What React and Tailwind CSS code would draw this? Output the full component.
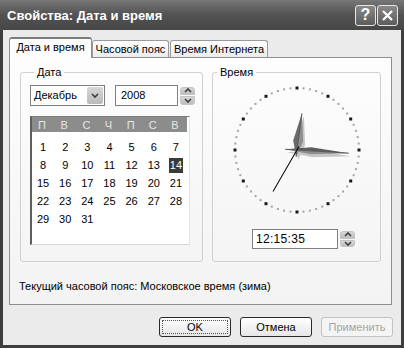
import React from "react";

const FONT = { fontFamily: '"Liberation Sans", Arial, sans-serif' };

function Chevron({ dir = "down", className = "" }) {
  const d = dir === "down" ? "M1 1 L4 4 L7 1" : "M1 4 L4 1 L7 4";
  return (
    <svg width="8" height="5" viewBox="0 0 8 5" className={className}>
      <path d={d} fill="none" stroke="#3c3c3c" strokeWidth="1.6" />
    </svg>
  );
}

function Spin({ h }) {
  return (
    <div className={`flex flex-col w-[15px] ${h} gap-px`}>
      <div className="flex-1 rounded-t-[3px] bg-gradient-to-b from-[#d8d8d8] to-[#bdbdbd] border border-[#c4c4c4] flex items-center justify-center">
        <Chevron dir="up" />
      </div>
      <div className="flex-1 rounded-b-[3px] bg-gradient-to-b from-[#d8d8d8] to-[#bdbdbd] border border-[#c4c4c4] flex items-center justify-center">
        <Chevron dir="down" />
      </div>
    </div>
  );
}

function Clock() {
  const C = 65;
  const R = 62;
  const dots = [];
  for (let i = 0; i < 60; i++) {
    const a = (i * 6 * Math.PI) / 180;
    const x = C + R * Math.sin(a);
    const y = C - R * Math.cos(a);
    if (i % 5 === 0) {
      dots.push(<rect key={i} x={x - 1.5} y={y - 1.5} width="3" height="3" fill="#1a1a1a" />);
    } else {
      dots.push(<rect key={i} x={x - 1} y={y - 1} width="2" height="2" fill="#a4a4a4" />);
    }
  }
  return (
    <svg width="130" height="130" viewBox="0 0 130 130">
      {dots}
      {/* shadows */}
      <g transform={`translate(${C + 2} ${C + 3}) rotate(7.6)`}>
        <polygon points="0,-37 5,-9 0,7 -5,-9" fill="#c6c6c6" />
      </g>
      <g transform={`translate(${C + 2} ${C + 3}) rotate(93.5)`}>
        <polygon points="0,-52 3.5,-14 0,12 -3.5,-14" fill="#c6c6c6" />
      </g>
      {/* hour hand */}
      <g transform={`translate(${C} ${C}) rotate(7.6)`}>
        <polygon points="0,-37 -5,-9 0,7" fill="#6a6a6a" />
        <polygon points="0,-37 5,-9 0,7" fill="#8e8e8e" />
        <line x1="0" y1="-37" x2="0" y2="7" stroke="#4a4a4a" strokeWidth="0.8" />
      </g>
      {/* minute hand */}
      <g transform={`translate(${C} ${C}) rotate(93.5)`}>
        <polygon points="0,-52 -3.5,-14 0,12" fill="#5e5e5e" />
        <polygon points="0,-52 3.5,-14 0,12" fill="#8e8e8e" />
        <line x1="0" y1="-52" x2="0" y2="12" stroke="#4a4a4a" strokeWidth="0.8" />
      </g>
      {/* second hand */}
      <g transform={`translate(${C} ${C}) rotate(210)`}>
        <line x1="0" y1="4" x2="0" y2="-48" stroke="#000" strokeWidth="1" />
      </g>
    </svg>
  );
}

const HEAD = ["П", "В", "С", "Ч", "П", "С", "В"];

export default function App() {
  const days = [];
  for (let i = 1; i <= 31; i++) days.push(i);
  const cells = [...days];
  while (cells.length < 42) cells.push(null);

  return (
    <div className="w-[404px] h-[348px] bg-[#3e3e3e] flex flex-col" style={FONT}>
      {/* title bar */}
      <div className="h-[30px] flex items-center pl-[7px] pr-[6px] bg-gradient-to-b from-[#777777] via-[#525252] to-[#474747]">
        <span className="flex-1 text-white font-bold text-[13px] leading-none pt-[1px]">
          Свойства: Дата и время
        </span>
        <div className="w-[21px] h-[21px] rounded-[3px] border border-[#e6e6e6] bg-gradient-to-b from-[#8a8a8a] to-[#5c5c5c] flex items-center justify-center text-white font-bold text-[16px] leading-none">
          ?
        </div>
        <div className="w-[21px] h-[21px] ml-[1px] rounded-[3px] border border-[#e6e6e6] bg-gradient-to-b from-[#8a8a8a] to-[#5c5c5c] flex items-center justify-center">
          <svg width="13" height="13" viewBox="0 0 13 13">
            <path d="M2 2 L11 11 M11 2 L2 11" stroke="#fff" strokeWidth="2.2" />
          </svg>
        </div>
      </div>

      {/* body */}
      <div className="flex-1 mx-[3px] mb-[3px] bg-[#ebebeb] flex flex-col pl-[6px] pr-[9px] pt-[7px] text-[11px] text-black">
        {/* tabs */}
        <div className="h-[20px] flex items-end">
          <div className="relative z-10 h-[21px] -mb-px w-[83px] bg-[#fdfdfd] border border-b-0 border-[#8e8e8e] border-t-[#7a7a7a] border-t-2 rounded-t-[3px] flex items-center justify-center pb-[2px]">
            Дата и время
          </div>
          <div className="h-[17px] w-[77px] bg-gradient-to-b from-[#ffffff] to-[#ececec] border border-b-0 border-[#9a9a9a] rounded-t-[3px] flex items-center justify-center">
            Часовой пояс
          </div>
          <div className="h-[17px] w-[98px] ml-[1px] bg-gradient-to-b from-[#ffffff] to-[#ececec] border border-b-0 border-[#9a9a9a] rounded-t-[3px] flex items-center justify-center">
            Время Интернета
          </div>
        </div>

        {/* panel */}
        <div className="h-[248px] border border-[#8e8e8e] bg-gradient-to-b from-[#fdfdfd] to-[#f3f3f3] pl-[10px] pt-[8px] flex flex-col">
          <div className="flex gap-[9px]">
            {/* Date group */}
            <fieldset className="w-[183px] h-[196px] border border-[#d0d0d0] rounded-[3px] pl-[9px]">
              <legend className="ml-[4px] px-[3px] text-[#000] leading-[13px]">Дата</legend>
              <div className="flex items-center mt-[6px]">
                <div className="w-[75px] h-[21px] border border-[#7f7f7f] bg-white flex items-center pl-[3px] pr-px">
                  <span className="flex-1">Декабрь</span>
                  <div className="w-[16px] h-[17px] rounded-[2px] bg-gradient-to-b from-[#d6d6d6] to-[#bababa] flex items-center justify-center">
                    <Chevron dir="down" />
                  </div>
                </div>
                <div className="ml-[10px] w-[63px] h-[21px] border border-[#7f7f7f] bg-white flex items-center pl-[5px]">
                  2008
                </div>
                <div className="ml-[2px]">
                  <Spin h="h-[18px]" />
                </div>
              </div>
              <div className="mt-[10px] w-[160px] h-[129px] bg-white border-l-2 border-l-[#5e5e5e] border-t border-t-[#7a7a7a] border-r border-r-[#e4e4e4] border-b border-b-[#d4d4d4] pr-[2px]">
                <div className="h-[15px] bg-[#8c8c8c] grid grid-cols-7 text-[#e6e6e6] items-center">
                  {HEAD.map((h, i) => (
                    <span key={i} className="text-center pr-[2px]">{h}</span>
                  ))}
                </div>
                <div className="grid grid-cols-7 pt-[6px]">
                  {cells.map((d, i) => (
                    <div key={i} className="h-[18px] flex items-center justify-center">
                      {d === 14 ? (
                        <span className="bg-[#3a3a3a] text-white px-[1px] leading-[15px]">14</span>
                      ) : (
                        <span>{d ?? ""}</span>
                      )}
                    </div>
                  ))}
                </div>
              </div>
            </fieldset>

            {/* Time group */}
            <fieldset className="w-[169px] h-[196px] border border-[#d0d0d0] rounded-[3px]">
              <legend className="ml-[4px] px-[3px] leading-[13px]">Время</legend>
              <div className="flex justify-center mt-[6px]">
                <Clock />
              </div>
              <div className="flex items-center mt-[14px] pl-[39px]">
                <div className="w-[86px] h-[20px] border border-[#7f7f7f] bg-white flex items-center pl-[3px] text-[12px] tracking-[0.3px]">
                  12:15:35
                </div>
                <div className="ml-[2px]">
                  <Spin h="h-[16px]" />
                </div>
              </div>
            </fieldset>
          </div>
          <div className="mt-[18px] leading-[13px] -ml-px">
            Текущий часовой пояс: Московское время (зима)
          </div>
        </div>

        {/* buttons */}
        <div className="flex justify-end gap-[9px] mt-[12px] -mr-px">
          <div className="w-[72px] h-[20px] rounded-[3px] border border-[#2a2a2a] bg-gradient-to-b from-[#ffffff] to-[#e6e6e6] p-[2px]">
            <div className="w-full h-full border border-dotted border-[#555] flex items-center justify-center">OK</div>
          </div>
          <div className="w-[72px] h-[20px] rounded-[3px] border border-[#2a2a2a] bg-gradient-to-b from-[#ffffff] to-[#e6e6e6] flex items-center justify-center">
            Отмена
          </div>
          <div className="w-[72px] h-[20px] rounded-[3px] border border-[#c2c2c2] bg-[#f4f4f4] text-[#a4a4a4] flex items-center justify-center">
            Применить
          </div>
        </div>
      </div>
    </div>
  );
}
